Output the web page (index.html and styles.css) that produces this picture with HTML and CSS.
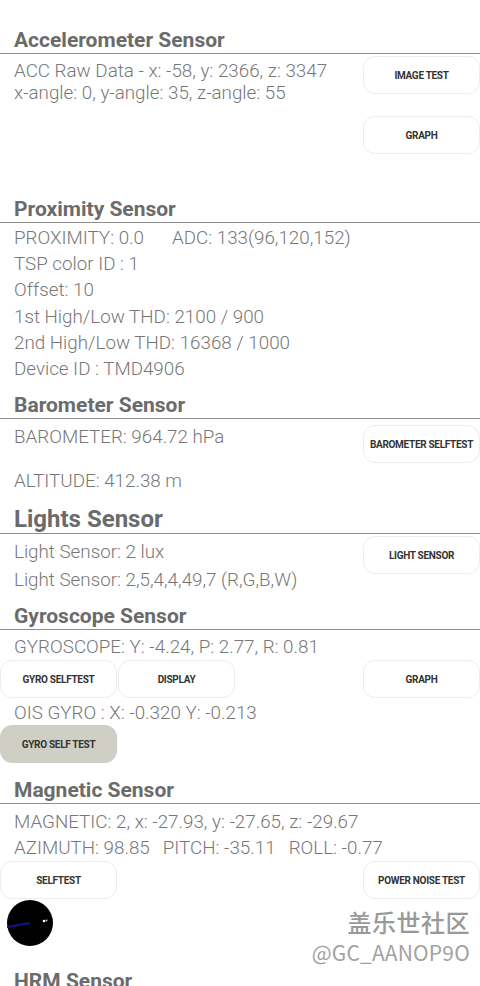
FILE: index.html
```html
<!DOCTYPE html>
<html lang="en">
<head>
    <meta charset="UTF-8">
    <meta name="viewport" content="width=device-width, initial-scale=1.0">
    <title>Sensor Test</title>
    <link rel="stylesheet" href="styles.css">
</head>
<body>
    <div class="page">
        <!-- Accelerometer -->
        <section class="sensor accel">
            <h2 class="title">Accelerometer Sensor</h2>
            <div class="split">
                <div class="readings">
                    <p>ACC Raw Data - x: -58, y: 2366, z: 3347</p>
                    <p>x-angle: 0, y-angle: 35, z-angle: 55</p>
                </div>
                <div class="side">
                    <button class="btn">IMAGE TEST</button>
                    <button class="btn">GRAPH</button>
                </div>
            </div>
        </section>

        <!-- Proximity -->
        <section class="sensor prox">
            <h2 class="title">Proximity Sensor</h2>
            <div class="readings">
                <p>PROXIMITY: 0.0<span class="gap"></span>ADC: 133(96,120,152)</p>
                <p>TSP color ID : 1</p>
                <p>Offset: 10</p>
                <p>1st High/Low THD: 2100 / 900</p>
                <p>2nd High/Low THD: 16368 / 1000</p>
                <p>Device ID : TMD4906</p>
            </div>
        </section>

        <!-- Barometer -->
        <section class="sensor baro">
            <h2 class="title">Barometer Sensor</h2>
            <div class="split">
                <div class="readings">
                    <p>BAROMETER: 964.72 hPa</p>
                    <p class="altitude">ALTITUDE: 412.38 m</p>
                </div>
                <div class="side">
                    <button class="btn">BAROMETER SELFTEST</button>
                </div>
            </div>
        </section>

        <!-- Lights -->
        <section class="sensor lights">
            <h2 class="title title-big">Lights Sensor</h2>
            <div class="split">
                <div class="readings">
                    <p>Light Sensor: 2 lux</p>
                    <p>Light Sensor: 2,5,4,4,49,7 (R,G,B,W)</p>
                </div>
                <div class="side">
                    <button class="btn">LIGHT SENSOR</button>
                </div>
            </div>
        </section>

        <!-- Gyroscope -->
        <section class="sensor gyro">
            <h2 class="title">Gyroscope Sensor</h2>
            <p class="line">GYROSCOPE: Y: -4.24, P: 2.77, R: 0.81</p>
            <div class="btn-row">
                <button class="btn">GYRO SELFTEST</button>
                <button class="btn">DISPLAY</button>
                <button class="btn push">GRAPH</button>
            </div>
            <p class="line ois">OIS GYRO : X: -0.320 Y: -0.213</p>
            <div class="btn-row">
                <button class="btn btn-grey">GYRO SELF TEST</button>
            </div>
        </section>

        <!-- Magnetic -->
        <section class="sensor magnetic">
            <h2 class="title">Magnetic Sensor</h2>
            <div class="readings">
                <p>MAGNETIC: 2, x: -27.93, y: -27.65, z: -29.67</p>
                <p>AZIMUTH: 98.85<span class="gap-s"></span>PITCH: -35.11<span class="gap-s"></span>ROLL: -0.77</p>
            </div>
            <div class="btn-row">
                <button class="btn">SELFTEST</button>
                <button class="btn push">POWER NOISE TEST</button>
            </div>
            <div class="compass">
                <svg width="46" height="46" viewBox="0 0 46 46">
                    <circle cx="23" cy="23" r="23" fill="#000"/>
                    <line x1="0" y1="27" x2="23" y2="23" stroke="#15158a" stroke-width="2"/>
                    <circle cx="37" cy="21" r="1.3" fill="#fff"/>
                    <circle cx="39.5" cy="20.5" r="0.9" fill="#ddd"/>
                </svg>
            </div>
        </section>

        <!-- HRM -->
        <section class="sensor hrm">
            <h2 class="title">HRM Sensor</h2>
        </section>

        <div class="watermark">
            <div class="wm-name">盖乐世社区</div>
            <div class="wm-id">@GC_AANOP9O</div>
        </div>
    </div>
</body>
</html>
```

FILE: styles.css
```css
body {
    margin: 0;
    background-color: #ffffff;
    font-family: Roboto, "Noto Sans", Arial, sans-serif;
    color: #777;
}

.page {
    position: relative;
    width: 480px;
    height: 986px;
    overflow: hidden;
}

p {
    margin: 0;
}

.title {
    margin: 0;
    padding: 0 14px 1px;
    font-size: 21px;
    line-height: 24px;
    font-weight: bold;
    color: #6b6b6b;
    border-bottom: 1px solid #8e8e8e;
}

.title-big {
    font-size: 24px;
    line-height: 26px;
}

.split {
    display: flex;
    justify-content: space-between;
}

.readings {
    padding-left: 14px;
    font-size: 18.8px;
    font-weight: 300;
    line-height: 22px;
}

.side {
    display: flex;
    flex-direction: column;
    width: 117px;
}

.btn {
    width: 117px;
    height: 38px;
    padding: 0;
    border: 1px solid #ececec;
    border-radius: 12px;
    background-color: #ffffff;
    color: #333;
    font-family: Roboto, Arial, sans-serif;
    font-size: 10px;
    font-weight: bold;
    letter-spacing: -0.3px;
}

.btn-grey {
    background-color: #cfcfc5;
    border-color: #cfcfc5;
}

.btn-row {
    display: flex;
    gap: 1px;
}

.push {
    margin-left: auto;
}

.line {
    padding-left: 14px;
    font-size: 18.8px;
    font-weight: 300;
    line-height: 22px;
}

/* Accelerometer */
.accel {
    margin-top: 28px;
}

.accel .readings {
    padding-top: 6px;
    line-height: 22px;
}

.accel .side {
    padding-top: 2px;
    gap: 22px;
}

/* Proximity */
.prox {
    margin-top: 43px;
}

.prox .readings {
    padding-top: 2px;
    line-height: 26.2px;
}

.gap {
    display: inline-block;
    width: 28px;
}

/* Barometer */
.baro {
    margin-top: 11px;
}

.baro .readings {
    padding-top: 7px;
}

.baro .altitude {
    margin-top: 22px;
}

.baro .side {
    padding-top: 6px;
}

/* Lights */
.lights {
    margin-top: 14px;
}

.lights .readings {
    padding-top: 4px;
    line-height: 28px;
}

.lights .side {
    padding-top: 2px;
}

/* Gyroscope */
.gyro {
    margin-top: 10px;
}

.gyro .line {
    padding-top: 6px;
}

.gyro .btn-row {
    margin-top: 2px;
}

.gyro .ois {
    padding-top: 4px;
}

.gyro .ois + .btn-row {
    margin-top: 1px;
}

/* Magnetic */
.magnetic {
    margin-top: 15px;
}

.magnetic .readings {
    padding-top: 5px;
    line-height: 26px;
}

.gap-s {
    display: inline-block;
    width: 13px;
}

.compass {
    margin: 1px 0 0 7px;
    width: 46px;
    height: 46px;
}

.compass svg {
    display: block;
}

/* HRM */
.hrm {
    margin-top: 23px;
}

.hrm .title {
    border-bottom: none;
}

/* watermark over the page */
.watermark {
    position: absolute;
    right: 10px;
    top: 906px;
    text-align: right;
    font-family: "Noto Sans CJK SC", "Noto Sans", sans-serif;
    color: #a2a2a2;
}

.wm-name {
    font-size: 24px;
    line-height: 32px;
    font-weight: 500;
    color: #999;
    letter-spacing: 0.5px;
}

.wm-id {
    font-size: 21px;
    line-height: 28px;
    letter-spacing: 0.2px;
}
```
